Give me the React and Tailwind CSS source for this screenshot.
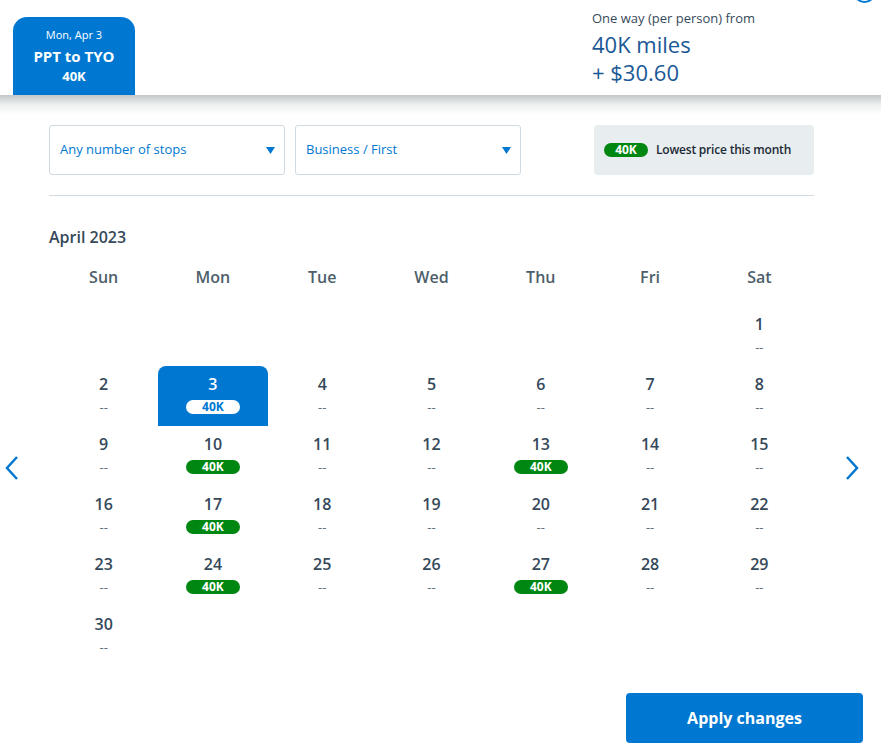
import React from "react";

const font = { fontFamily: '"Open Sans", "Noto Sans", sans-serif' };

const cells = [
  null, null, null, null, null, null, { d: 1 },
  { d: 2 }, { d: 3, sel: true }, { d: 4 }, { d: 5 }, { d: 6 }, { d: 7 }, { d: 8 },
  { d: 9 }, { d: 10, p: true }, { d: 11 }, { d: 12 }, { d: 13, p: true }, { d: 14 }, { d: 15 },
  { d: 16 }, { d: 17, p: true }, { d: 18 }, { d: 19 }, { d: 20 }, { d: 21 }, { d: 22 },
  { d: 23 }, { d: 24, p: true }, { d: 25 }, { d: 26 }, { d: 27, p: true }, { d: 28 }, { d: 29 },
  { d: 30 }, null, null, null, null, null, null,
];

function Caret() {
  return (
    <svg width="9" height="7" viewBox="0 0 9 7" className="shrink-0">
      <path d="M0 0 H9 L4.5 7 Z" fill="#0078d2" />
    </svg>
  );
}

function Cell({ c }) {
  if (!c) return <div className="h-[60px]" />;
  if (c.sel)
    return (
      <div className="h-[60px] bg-[#0078d2] rounded-t-[8px] flex flex-col items-center pt-[8px]">
        <div className="text-[16px] leading-[20px] font-semibold text-white">{c.d}</div>
        <div className="mt-[6px] w-[54px] h-[14px] rounded-full bg-white text-[#0078d2] text-[12px] leading-[14px] font-bold text-center">
          40K
        </div>
      </div>
    );
  return (
    <div className="h-[60px] flex flex-col items-center pt-[8px]">
      <div className="text-[16px] leading-[20px] font-semibold text-[#36495a]">{c.d}</div>
      {c.p ? (
        <div className="mt-[6px] w-[54px] h-[14px] rounded-full bg-[#008712] text-white text-[12px] leading-[14px] font-bold text-center">
          40K
        </div>
      ) : (
        <div className="mt-[6px] h-[14px] text-[13px] leading-[14px] text-[#5f6f7b]">--</div>
      )}
    </div>
  );
}

export default function App() {
  return (
    <div className="w-[881px] h-[755px] bg-white overflow-hidden relative" style={font}>
      <div className="absolute left-[853px] top-[-20px] w-[23px] h-[23px] rounded-full border-2 border-[#0078d2]" />
      {/* header */}
      <div className="h-[95px] flex items-start">
        <div className="ml-[13px] mt-[17px] w-[122px] h-[78px] bg-[#0078d2] rounded-t-[14px] flex flex-col items-center text-white pt-[10px]">
          <div className="text-[11px] leading-[16px]">Mon, Apr 3</div>
          <div className="mt-[3px] text-[15px] leading-[20px] font-bold">PPT to TYO</div>
          <div className="mt-[1px] text-[13px] leading-[18px] font-bold">40K</div>
        </div>
        <div className="ml-[457px] mt-[8px]">
          <div className="text-[13px] leading-[20px] text-[#36495a]">One way (per person) from</div>
          <div className="mt-[2px] text-[22px] leading-[28px] text-[#1a5896]">40K miles</div>
          <div className="text-[22px] leading-[28px] text-[#1a5896]">+ $30.60</div>
        </div>
      </div>
      <div className="h-[20px] bg-gradient-to-b from-[#c3c7c9] via-[#eef0f1] to-white" />

      {/* filters */}
      <div className="mt-[10px] mx-[49px] w-[765px] flex items-center">
        <div className="w-[236px] h-[50px] border border-[#d0dae0] rounded-[3px] flex items-center justify-between pl-[10px] pr-[9px]">
          <span className="text-[13px] text-[#0078d2]">Any number of stops</span>
          <Caret />
        </div>
        <div className="ml-[10px] w-[226px] h-[50px] border border-[#d0dae0] rounded-[3px] flex items-center justify-between pl-[10px] pr-[9px]">
          <span className="text-[13px] text-[#0078d2]">Business / First</span>
          <Caret />
        </div>
        <div className="ml-auto w-[220px] h-[50px] bg-[#e8edef] rounded-[4px] flex items-center pl-[10px]">
          <div className="w-[44px] h-[14px] rounded-full bg-[#008712] text-white text-[12px] leading-[14px] font-bold text-center">
            40K
          </div>
          <span className="ml-[8px] text-[12px] font-semibold text-[#1c2a36] tracking-[-0.2px]">Lowest price this month</span>
        </div>
      </div>
      <div className="mx-[49px] w-[765px] mt-[20px] border-t border-[#d0dae0]" />

      <div className="mx-[49px] mt-[30px] text-[16px] leading-[22px] font-semibold text-[#36495a]">April 2023</div>

      {/* calendar */}
      <div className="flex items-start mt-[19px]">
        <div className="w-[49px] flex pl-[4px] pt-[188px]">
          <svg width="16" height="26" viewBox="0 0 16 26">
            <path d="M13 2 L3 13 L13 24" fill="none" stroke="#0078d2" strokeWidth="2.5" />
          </svg>
        </div>
        <div className="w-[765px]">
          <div className="grid grid-cols-7">
            {["Sun", "Mon", "Tue", "Wed", "Thu", "Fri", "Sat"].map((d) => (
              <div key={d} className="text-center text-[16px] leading-[20px] font-semibold text-[#4e5f6b]">
                {d}
              </div>
            ))}
          </div>
          <div className="grid grid-cols-7 mt-[19px]">
            {cells.map((c, i) => (
              <Cell key={i} c={c} />
            ))}
          </div>
        </div>
        <div className="flex-1 flex pl-[30px] pt-[188px]">
          <svg width="16" height="26" viewBox="0 0 16 26">
            <path d="M3 2 L13 13 L3 24" fill="none" stroke="#0078d2" strokeWidth="2.5" />
          </svg>
        </div>
      </div>

      <div className="flex justify-end pr-[18px] mt-[27px]">
        <div className="w-[237px] h-[50px] bg-[#0078d2] rounded-[4px] flex items-center justify-center text-white text-[16px] font-bold">
          Apply changes
        </div>
      </div>
    </div>
  );
}
